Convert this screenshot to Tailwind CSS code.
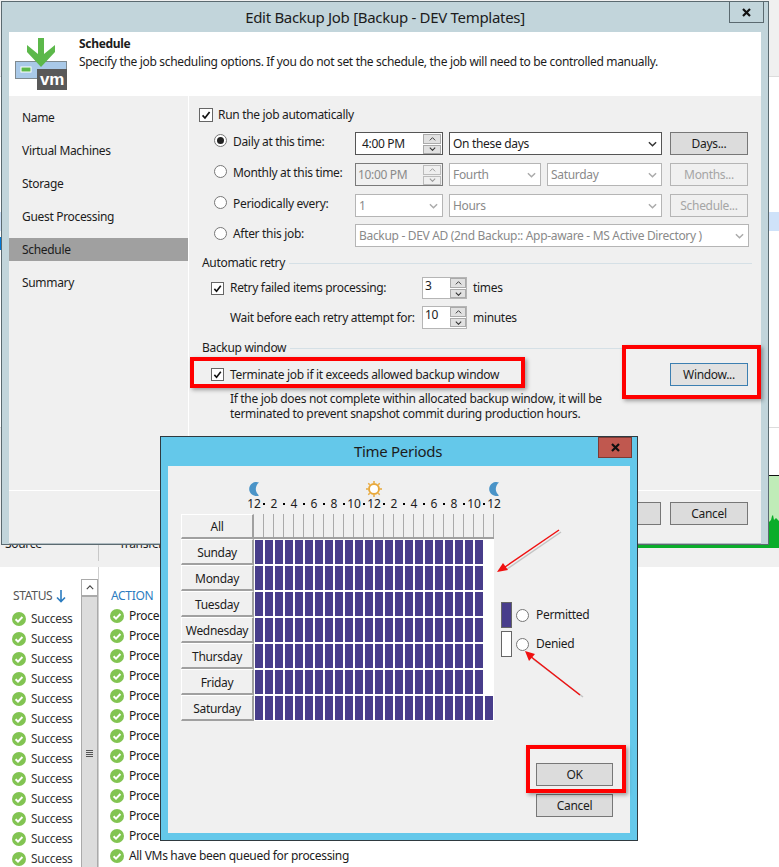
<!DOCTYPE html>
<html>

<head>
  <title>Edit Backup Job</title>
  <script src="https://cdn.jsdelivr.net/npm/@tailwindcss/browser@4"></script>
</head>

<body class="bg-white">
  <!-- shared icons -->
  <svg class="hidden">
    <symbol id="chev-down" viewBox="0 0 10 6"><path d="M1 1l4 4 4-4" fill="none" stroke="currentColor" stroke-width="1.6" /></symbol>
    <symbol id="chev-up" viewBox="0 0 10 6"><path d="M1 5l4-4 4 4" fill="none" stroke="currentColor" stroke-width="1.4" /></symbol>
    <symbol id="ok" viewBox="0 0 14 14"><circle cx="7" cy="7" r="7" fill="#82c452" /><path d="M3.6 7.2l2.4 2.4 4.4-4.6" fill="none" stroke="#fff" stroke-width="2" /></symbol>
    <symbol id="tick" viewBox="0 0 14 14"><path d="M3 7.5l2.8 3 5.4-7" fill="none" stroke="#111" stroke-width="2" /></symbol>
    <symbol id="moon" viewBox="0 0 11 14"><path d="M10 0.6a7 7 0 1 0 0 12.8a8 8 0 0 1 0-12.8z" fill="#4a94c8" /></symbol>
  </svg>

  <div class="relative w-[779px] h-[867px] overflow-hidden font-['Noto_Sans',sans-serif] text-[12px] tracking-[-0.32px] text-[#1c1c1c]">

    <!-- main app behind the dialogs -->
    <div class="flex flex-col h-full">
      <div class="h-[77px] shrink-0 bg-[#f0f0f0] border-b border-[#dcdcdc]"></div>
      <div class="h-[135px] shrink-0"></div>
      <div class="h-[19px] shrink-0 bg-[#cfe2f9]"></div>
      <div class="h-[197px] shrink-0 border-b border-[#dcdcdc]"></div>
      <div class="flex h-[139px] shrink-0">
        <div class="w-[400px] bg-[#f0f0f0] flex items-end">
          <span class="w-[98px] pl-[5px] pb-[15px] leading-[16px]">Source</span>
          <span class="h-[20px] border-l border-[#c8c8c8] mb-[6px]"></span>
          <span class="pl-[20px] pb-[15px] leading-[16px]">Transfer</span>
        </div>
        <div class="flex-1 flex flex-col">
          <div class="h-[47px]"></div>
          <div class="h-[73px] border-t border-[#111] bg-[#c0ecb8]">
            <svg width="379" height="72" viewBox="0 0 379 72"><polygon points="0,72 0,67 238,67 369,67 369,46 371,44 372,40 373,39 374,44 376,42 379,45 379,72" fill="#0aad2a" /></svg>
          </div>
          <div class="flex-1 bg-[#f0f0f0]"></div>
        </div>
      </div>
      <div class="flex flex-1 min-h-0 overflow-hidden">
        <div class="w-[81px] pt-[19px] pl-[12px]">
          <div class="h-[23px] pb-[3px] pl-px flex items-center gap-[4px] text-[#555]">STATUS
            <svg width="10" height="13" viewBox="0 0 10 13"><path d="M5 0v11M1 7.5l4 4 4-4" fill="none" stroke="#2b7cc0" stroke-width="1.6" /></svg>
          </div>
          <div id="status-rows"></div>
        </div>
        <div class="w-[18px] pt-[12px] border-r border-[#cfcfcf] flex flex-col">
          <div class="h-[17px] w-[17px] shrink-0 bg-white border border-[#aaa] flex items-center justify-center text-[#444]">
            <svg width="8" height="5"><use href="#chev-up" /></svg>
          </div>
          <div class="flex-1 w-[17px] bg-[#dcdcdc] border-x border-t border-[#aaa] flex flex-col gap-[1px] pt-[153px] items-center">
            <span class="w-[7px] h-[1px] bg-[#555]"></span><span class="w-[7px] h-[1px] bg-[#555]"></span><span class="w-[7px] h-[1px] bg-[#555]"></span><span class="w-[7px] h-[1px] bg-[#555]"></span>
          </div>
        </div>
        <div class="flex-1 pt-[19px] pl-[11px]">
          <div class="h-[20px] pl-px flex items-center text-[#2b7cc0]">ACTION</div>
          <div id="action-rows"></div>
        </div>
      </div>
    </div>
    <div class="absolute left-0 top-[237px] w-px h-[13px] bg-[#0078d7]"></div>

    <!-- Edit Backup Job window -->
    <div class="absolute left-[1px] top-[1px] w-[768px] h-[544px] border border-[#5b6a70] bg-[#c2d5db] px-[7px] flex flex-col">
      <div class="h-[30px] shrink-0 flex items-center justify-center text-[15px] tracking-[-0.3px] pl-[0px]">Edit Backup Job [Backup - DEV Templates]</div>
      <div class="absolute right-[4px] top-[-1px] w-[35px] h-[22px] border border-[#5b6a70] flex items-center justify-center">
        <svg width="9" height="9" viewBox="0 0 9 9"><path d="M1 1l7 7M8 1l-7 7" stroke="#111" stroke-width="2.2" /></svg>
      </div>

      <div class="h-[64px] shrink-0 bg-white flex">
        <svg class="mt-[6px] ml-[6px] shrink-0" width="52" height="52" viewBox="15 38 52 52">
          <rect x="15.5" y="61.5" width="51" height="17" fill="#a9c9e8" stroke="#7f8a90" />
          <rect x="21" y="67" width="10" height="5" fill="#5cb84a" stroke="#fff" />
          <polygon points="38,38 44,38 44,54 55,45 55,52 41,67 27,52 27,45 38,54" fill="#5cb84a" />
          <rect x="37" y="69" width="30" height="21" fill="#595959" />
          <text x="52" y="85" text-anchor="middle" font-size="17" font-weight="700" fill="#fff" font-family="Liberation Sans, sans-serif">vm</text>
        </svg>
        <div class="pl-[12px] pt-[3px] leading-[18px]">
          <div class="font-bold">Schedule</div>
          <div>Specify the job scheduling options. If you do not set the schedule, the job will need to be controlled manually.</div>
        </div>
      </div>

      <div class="flex h-[394px] shrink-0 bg-[#f0f0f0]">
        <nav class="w-[180px] shrink-0 border-r border-white pt-[10px] flex flex-col gap-[10px]">
          <div class="h-[23px] pl-[13px] flex items-center">Name</div>
          <div class="h-[23px] pl-[13px] flex items-center">Virtual Machines</div>
          <div class="h-[23px] pl-[13px] flex items-center">Storage</div>
          <div class="h-[23px] pl-[13px] flex items-center">Guest Processing</div>
          <div class="h-[23px] pl-[13px] flex items-center bg-[#a0a0a0]">Schedule</div>
          <div class="h-[23px] pl-[13px] flex items-center">Summary</div>
        </nav>

        <div class="flex-1 pt-[7px] pl-[10px]">
          <div class="h-[23px] flex items-center gap-[5px]">
            <span class="w-[14px] h-[14px] bg-white border border-[#666]"><svg width="12" height="12"><use href="#tick" /></svg></span>Run the job automatically
          </div>

          <div class="mt-[6px] flex flex-col gap-[8px]">
            <div class="h-[23px] flex items-center">
              <span class="ml-[15px] mb-[6px] w-[13px] h-[13px] rounded-full border border-[#777] bg-white flex items-center justify-center"><span class="w-[7px] h-[7px] rounded-full bg-[#222]"></span></span>
              <span class="ml-[6px] w-[122px] mb-[4px]">Daily at this time:</span>
              <div class="w-[88px] h-[23px] bg-white border border-[#555] flex items-center justify-between pl-[6px] pr-px">4:00 PM
                <div class="w-[18px] flex flex-col gap-px text-[#333]">
                  <span class="h-[10px] bg-[#e1e1e1] border border-[#aaa] flex items-center justify-center"><svg width="7" height="4"><use href="#chev-up" /></svg></span>
                  <span class="h-[9px] bg-[#e1e1e1] border border-[#aaa] flex items-center justify-center"><svg width="7" height="4"><use href="#chev-down" /></svg></span>
                </div>
              </div>
              <div class="ml-[6px] w-[213px] h-[23px] bg-white border border-[#555] flex items-center justify-between pl-[3px] pr-[4px]">On these days
                <svg width="9" height="6" class="text-[#333]"><use href="#chev-down" /></svg>
              </div>
              <div class="ml-[8px] w-[78px] h-[23px] bg-[#dcdcdc] border border-[#777] flex items-center justify-center">Days...</div>
            </div>

            <div class="h-[23px] flex items-center text-[#8a8a8a]">
              <span class="ml-[15px] mb-[6px] w-[13px] h-[13px] rounded-full border border-[#777] bg-white"></span>
              <span class="ml-[6px] w-[122px] mb-[4px] text-[#1c1c1c]">Monthly at this time:</span>
              <div class="w-[88px] h-[23px] bg-[#f0f0f0] border border-[#7a7a7a] flex items-center justify-between pl-[2px] pr-px">10:00 PM
                <div class="w-[18px] flex flex-col gap-px text-[#999]">
                  <span class="h-[10px] bg-[#efefef] border border-[#bbb] flex items-center justify-center"><svg width="7" height="4"><use href="#chev-up" /></svg></span>
                  <span class="h-[9px] bg-[#efefef] border border-[#bbb] flex items-center justify-center"><svg width="7" height="4"><use href="#chev-down" /></svg></span>
                </div>
              </div>
              <div class="ml-[6px] w-[92px] h-[23px] bg-white border border-[#b5b5b5] flex items-center justify-between pl-[3px] pr-[4px]">Fourth
                <svg width="9" height="6" class="text-[#aaa]"><use href="#chev-down" /></svg>
              </div>
              <div class="ml-[6px] w-[115px] h-[23px] bg-white border border-[#b5b5b5] flex items-center justify-between pl-[3px] pr-[4px]">Saturday
                <svg width="9" height="6" class="text-[#aaa]"><use href="#chev-down" /></svg>
              </div>
              <div class="ml-[8px] w-[78px] h-[23px] bg-[#f0f0f0] border border-[#b5b5b5] flex items-center justify-center text-[#a5a5a5]">Months...</div>
            </div>

            <div class="h-[23px] flex items-center text-[#8a8a8a]">
              <span class="ml-[15px] mb-[6px] w-[13px] h-[13px] rounded-full border border-[#777] bg-white"></span>
              <span class="ml-[6px] w-[122px] mb-[4px] text-[#1c1c1c]">Periodically every:</span>
              <div class="w-[88px] h-[23px] bg-white border border-[#b5b5b5] flex items-center justify-between pl-[3px] pr-[4px]">1
                <svg width="9" height="6" class="text-[#aaa]"><use href="#chev-down" /></svg>
              </div>
              <div class="ml-[6px] w-[213px] h-[23px] bg-white border border-[#b5b5b5] flex items-center justify-between pl-[3px] pr-[4px]">Hours
                <svg width="9" height="6" class="text-[#aaa]"><use href="#chev-down" /></svg>
              </div>
              <div class="ml-[8px] w-[78px] h-[23px] bg-[#f0f0f0] border border-[#b5b5b5] flex items-center justify-center text-[#a5a5a5]">Schedule...</div>
            </div>

            <div class="h-[23px] -mt-px flex items-center text-[#8a8a8a]">
              <span class="ml-[15px] mb-[5px] w-[13px] h-[13px] rounded-full border border-[#777] bg-white"></span>
              <span class="ml-[6px] w-[122px] mb-[3px] text-[#1c1c1c]">After this job:</span>
              <div class="w-[394px] h-[23px] bg-white border border-[#b5b5b5] flex items-center justify-between pl-[3px] pr-[4px]">Backup - DEV AD (2nd Backup:: App-aware - MS Active Directory )
                <svg width="9" height="6" class="text-[#aaa]"><use href="#chev-down" /></svg>
              </div>
            </div>
          </div>

          <div class="mt-[8px] h-[16px] w-[550px] ml-[3px] flex items-center gap-[4px]">Automatic retry<span class="flex-1 h-px bg-[#d5e0e6]"></span></div>

          <div class="mt-[6px] h-[22px] flex items-center">
            <span class="ml-[12px] w-[13px] h-[13px] bg-white border border-[#666]"><svg width="11" height="11"><use href="#tick" /></svg></span>
            <span class="ml-[6px] w-[192px]">Retry failed items processing:</span>
            <div class="w-[45px] h-[22px] bg-white border border-[#b5b5b5] flex justify-between">
              <span class="pl-[2px] leading-[16px]">3</span>
              <div class="w-[16px] flex flex-col gap-px text-[#333]">
                <span class="h-[10px] bg-[#e1e1e1] border border-[#aaa] flex items-center justify-center"><svg width="7" height="4"><use href="#chev-up" /></svg></span>
                <span class="h-[9px] bg-[#e1e1e1] border border-[#aaa] flex items-center justify-center"><svg width="7" height="4"><use href="#chev-down" /></svg></span>
              </div>
            </div>
            <span class="ml-[6px]">times</span>
          </div>

          <div class="mt-[7px] h-[23px] flex items-center">
            <span class="ml-[31px] w-[192px]">Wait before each retry attempt for:</span>
            <div class="w-[45px] h-[23px] bg-white border border-[#b5b5b5] flex justify-between">
              <span class="pl-[2px] leading-[16px]">10</span>
              <div class="w-[16px] flex flex-col gap-px text-[#333]">
                <span class="h-[10px] bg-[#e1e1e1] border border-[#aaa] flex items-center justify-center"><svg width="7" height="4"><use href="#chev-up" /></svg></span>
                <span class="h-[9px] bg-[#e1e1e1] border border-[#aaa] flex items-center justify-center"><svg width="7" height="4"><use href="#chev-down" /></svg></span>
              </div>
            </div>
            <span class="ml-[6px]">minutes</span>
          </div>

          <div class="mt-[11px] h-[16px] w-[550px] ml-[3px] flex items-center gap-[4px]">Backup window<span class="flex-1 h-px bg-[#d5e0e6]"></span></div>

          <div class="mt-[7px] h-[23px] w-[549px] flex items-center">
            <span class="ml-[12px] w-[13px] h-[13px] bg-white border border-[#666]"><svg width="11" height="11"><use href="#tick" /></svg></span>
            <span class="ml-[6px]">Terminate job if it exceeds allowed backup window</span>
            <div class="ml-auto w-[78px] h-[23px] bg-[#e1e1e1] border border-[#3c7fb1] flex items-center justify-center">Window...</div>
          </div>
          <p class="mt-[5px] ml-[31px] leading-[15px]">If the job does not complete within allocated backup window, it will be<br>terminated to prevent snapshot commit during production hours.</p>
        </div>
      </div>

      <div class="flex-1 bg-[#f0f0f0] border-t border-white border-b border-b-[#b0bcc2] flex justify-end items-start gap-[9px] pt-[11px] pr-[13px]">
        <div class="w-[78px] h-[23px] bg-[#dcdcdc] border border-[#777]"></div>
        <div class="w-[78px] h-[23px] bg-[#dcdcdc] border border-[#777] flex items-center justify-center">Cancel</div>
      </div>
    </div>

    <!-- Time Periods dialog -->
    <div class="absolute left-[160px] top-[436px] w-[478px] h-[405px] border border-[#2f3a40] bg-[#64c8ea] px-[7px] pb-[7px] flex flex-col">
      <div class="h-[29px] shrink-0 flex items-center justify-center text-[15px] tracking-[-0.3px] pr-[2px]">Time Periods</div>
      <div class="absolute right-[5px] top-0 w-[34px] h-[21px] bg-[#c0584f] border border-[#7d3a34] flex items-center justify-center">
        <svg width="9" height="9" viewBox="0 0 9 9"><path d="M1 1l7 7M8 1l-7 7" stroke="#111" stroke-width="2.2" /></svg>
      </div>

      <div class="flex-1 bg-[#f0f0f0] pl-[13px] pt-[16px] flex">
        <div class="w-[313px]">
          <div class="ml-[68px] h-[14px] grid grid-cols-[repeat(25,10px)]">
            <div class="flex justify-center"><svg class="shrink-0" width="11" height="14"><use href="#moon" /></svg></div>
            <div class="col-start-13 flex justify-center">
              <svg class="shrink-0 mt-[-1px]" width="16" height="16" viewBox="0 0 16 16"><circle cx="8" cy="8" r="5" fill="#fff" stroke="#e8a93c" stroke-width="2" /><path d="M8 0v2M8 14v2M0 8h2M14 8h2M2.3 2.3l1.4 1.4M12.3 12.3l1.4 1.4M2.3 13.7l1.4-1.4M12.3 3.7l1.4-1.4" stroke="#e8a93c" stroke-width="1.5" /></svg>
            </div>
            <div class="col-start-25 flex justify-center"><svg class="shrink-0" width="11" height="14"><use href="#moon" /></svg></div>
          </div>
          <div id="hours" class="ml-[68px] h-[18px] pt-px leading-[14px] grid grid-cols-[repeat(25,10px)] tracking-normal"></div>

          <div class="flex h-[25px]">
            <div class="w-[73px] pt-[2px] bg-[#f0f0f0] border-t border-l border-white border-b-2 border-b-[#a0a0a0] border-r-2 border-r-[#a0a0a0] flex items-center justify-center">All</div>
            <div id="all-row" class="flex w-[240px] border-b-2 border-[#a0a0a0]"></div>
          </div>
          <div id="day-rows"></div>
        </div>

        <div class="ml-[7px] pt-[120px] w-[125px]">
          <div class="flex flex-col gap-[3px]">
            <div class="flex items-center h-[26px]">
              <span class="w-[11px] h-[26px] bg-[#483d8b] border border-[#666]"></span>
              <span class="ml-[4px] w-[13px] h-[13px] rounded-full border border-[#777] bg-white"></span>
              <span class="ml-[7px]">Permitted</span>
            </div>
            <div class="flex items-center h-[26px]">
              <span class="w-[11px] h-[26px] bg-white border border-[#666]"></span>
              <span class="ml-[4px] w-[13px] h-[13px] rounded-full border border-[#777] bg-white"></span>
              <span class="ml-[7px]">Denied</span>
            </div>
          </div>
          <div class="mt-[106px] ml-[35px] w-[77px] flex flex-col gap-[8px]">
            <div class="h-[23px] bg-[#dcdcdc] border border-[#777] flex items-center justify-center">OK</div>
            <div class="h-[23px] bg-[#dcdcdc] border border-[#777] flex items-center justify-center">Cancel</div>
          </div>
        </div>
      </div>
    </div>

    <!-- red annotations on top of the screenshot -->
    <div class="absolute left-[190px] top-[357px] w-[335px] h-[31px] border-4 border-[#f00] shadow-[2px_2px_4px_rgba(0,0,0,0.35)]"></div>
    <div class="absolute left-[622px] top-[345px] w-[139px] h-[54px] border-4 border-[#f00] shadow-[2px_2px_4px_rgba(0,0,0,0.35)]"></div>
    <div class="absolute left-[526px] top-[745px] w-[100px] h-[48px] border-4 border-[#f00] shadow-[2px_2px_4px_rgba(0,0,0,0.35)]"></div>
    <svg class="absolute left-0 top-0" width="779" height="867" viewBox="0 0 779 867">
      <g fill="#000" opacity="0.18" stroke="#000" transform="translate(2 2)">
        <path d="M559 530L505 567" fill="none" stroke-width="1.5" />
        <path d="M581 695L531 657" fill="none" stroke-width="1.5" />
      </g>
      <path d="M559 530L505 567" stroke="#f01010" stroke-width="1.5" fill="none" />
      <polygon points="497,572 503,563 508,570" fill="#f01010" />
      <path d="M580 695L530 656" stroke="#f01010" stroke-width="1.5" fill="none" />
      <polygon points="525,651 535,654 529,661" fill="#f01010" />
    </svg>
  </div>

  <script>
    // repeated rows, class names written out in full
    const okIcon = '<svg class="shrink-0" width="14" height="14"><use href="#ok" /></svg>';
    let statusHtml = '';
    for (let i = 0; i < 13; i++) {
      statusHtml += '<div class="h-[20px] flex items-center gap-[5px] text-[#333]">' + okIcon + 'Success</div>';
    }
    document.getElementById('status-rows').innerHTML = statusHtml;

    // the dialog covers these rows, only the start of the text shows
    let actionHtml = '';
    for (let i = 0; i < 12; i++) {
      actionHtml += '<div class="h-[20px] flex items-center gap-[5px] whitespace-nowrap">' + okIcon + 'Proce</div>';
    }
    actionHtml += '<div class="h-[20px] flex items-center gap-[5px] whitespace-nowrap">' + okIcon + 'All VMs have been queued for processing</div>';
    document.getElementById('action-rows').innerHTML = actionHtml;

    const hourLabels = ['12', '2', '4', '6', '8', '10', '12', '2', '4', '6', '8', '10', '12'];
    let hoursHtml = '';
    hourLabels.forEach((label, i) => {
      hoursHtml += '<div class="flex justify-center whitespace-nowrap">' + label + '</div>';
      if (i < hourLabels.length - 1) hoursHtml += '<div class="flex justify-center items-start"><span class="mt-[6px] w-[2px] h-[2px] bg-black"></span></div>';
    });
    document.getElementById('hours').innerHTML = hoursHtml;

    let allHtml = '';
    for (let h = 0; h < 24; h++) {
      allHtml += '<div class="w-[10px] border-r border-[#aaa]"></div>';
    }
    document.getElementById('all-row').innerHTML = allHtml;

    const days = ['Sunday', 'Monday', 'Tuesday', 'Wednesday', 'Thursday', 'Friday', 'Saturday'];
    let daysHtml = '';
    days.forEach((day) => {
      let cells = '';
      for (let h = 0; h < 24; h++) {
        const denied = h === 23 && day !== 'Saturday';
        cells += denied
          ? '<div class="w-[8px] bg-white"></div>'
          : '<div class="w-[8px] bg-[#483d8b]"></div>';
      }
      daysHtml += '<div class="flex h-[26px]">'
        + '<div class="w-[73px] pt-[2px] bg-[#f0f0f0] border-t border-l border-white border-b-2 border-b-[#a0a0a0] border-r-2 border-r-[#a0a0a0] flex items-center justify-center">' + day + '</div>'
        + '<div class="flex gap-[2px] w-[240px] bg-white py-px pl-px">' + cells + '</div>'
        + '</div>';
    });
    document.getElementById('day-rows').innerHTML = daysHtml;
  </script>
</body>

</html>
